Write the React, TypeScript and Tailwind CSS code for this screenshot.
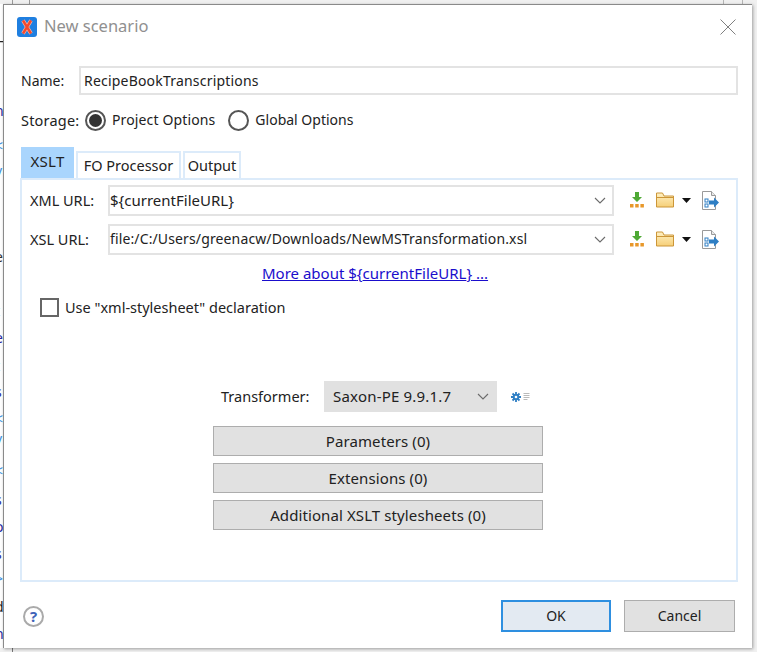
import React from "react";

function Chevron({ c = "#6b6b6b" }: { c?: string }) {
  return (
    <svg width="12" height="7" viewBox="0 0 12 7" fill="none">
      <path d="M1 1l5 5 5-5" stroke={c} strokeWidth="1.1" />
    </svg>
  );
}

function Download() {
  return (
    <svg width="14" height="16" viewBox="0 0 14 16">
      <path d="M5 0h4v5h3l-5 5-5-5h3z" fill="#4fa935" />
      <rect x="0" y="12" width="3.500" height="3.500" fill="#e8982a" />
      <rect x="5.200" y="12" width="3.500" height="3.500" fill="#e8982a" />
      <rect x="10.400" y="12" width="3.500" height="3.500" fill="#e8982a" />
    </svg>
  );
}

function Folder() {
  return (
    <svg width="18" height="16" viewBox="0 0 18 16">
      <defs>
        <linearGradient id="fold" x1="0" y1="0" x2="0" y2="1">
          <stop offset="0" stopColor="#fff1c4" />
          <stop offset="1" stopColor="#f6cf78" />
        </linearGradient>
      </defs>
      <path d="M.5 15V1h6l1.500 3h9.500v11z" fill="url(#fold)" stroke="#cc9638" />
      <path d="M1 5.500h16" stroke="#cc9638" />
    </svg>
  );
}

function Caret() {
  return (
    <svg width="9" height="5" viewBox="0 0 9 5">
      <path d="M0 0h9L4.500 5z" fill="#111" />
    </svg>
  );
}

function DocArrow() {
  return (
    <svg width="17" height="19" viewBox="0 0 17 19">
      <path d="M.5.500h9l4 4v14h-13z" fill="#fff" stroke="#9a9a9a" />
      <path d="M9.500.500v4h4" fill="#e8e8e8" stroke="#9a9a9a" />
      <rect x="3" y="8" width="3" height="3" fill="#fff" stroke="#2f7fc4" />
      <rect x="3" y="13" width="3" height="3" fill="#fff" stroke="#2f7fc4" />
      <path d="M7 9.500h5V6.500l5 5-5 5v-3H7z" fill="#2f7fc4" />
    </svg>
  );
}

function Field({ label, value, valueClass }: { label: string; value: string; valueClass: string }) {
  return (
    <div className="flex items-center h-[32px]">
      <span className="w-[78px] shrink-0 text-[14.500px]">{label}</span>
      <div className="w-[506px] h-[31px] shrink-0 border-2 border-[#e3e3e3] flex items-center justify-between pr-[6px]">
        <span className={valueClass}>{value}</span>
        <Chevron />
      </div>
      <div className="flex items-center ml-[16px]">
        <Download />
        <div className="ml-[12px]"><Folder /></div>
        <div className="ml-[8px]"><Caret /></div>
        <div className="ml-[11px]"><DocArrow /></div>
      </div>
    </div>
  );
}

function GreyButton({ children }: { children: React.ReactNode }) {
  return (
    <button className="w-[330px] h-[30px] bg-[#e1e1e1] border border-[#adadad] flex items-center justify-center text-[15px] tracking-[0.1px]">
      {children}
    </button>
  );
}

const marks: { y: number; c: string; color: string }[] = [
  { y: 30, c: "—", color: "#222" },
  { y: 60, c: "i", color: "#2a2aa0" },
  { y: 100, c: "n", color: "#2a2aa0" },
  { y: 135, c: "<", color: "#3b8fe0" },
  { y: 160, c: "v", color: "#3b8fe0" },
  { y: 246, c: "e", color: "#333" },
  { y: 272, c: "l", color: "#2a2aa0" },
  { y: 300, c: "t", color: "#2a2aa0" },
  { y: 327, c: "e", color: "#2a2aa0" },
  { y: 355, c: "t", color: "#2a2aa0" },
  { y: 381, c: "s", color: "#2a2aa0" },
  { y: 408, c: "<", color: "#3b8fe0" },
  { y: 428, c: "v", color: "#3b8fe0" },
  { y: 460, c: "<", color: "#3b8fe0" },
  { y: 489, c: "s", color: "#2a2aa0" },
  { y: 516, c: "o", color: "#2a2aa0" },
  { y: 543, c: "s", color: "#2a2aa0" },
  { y: 568, c: ">", color: "#3b8fe0" },
  { y: 596, c: "d", color: "#222" },
  { y: 623, c: "n", color: "#2a2aa0" },
];

export default function App() {
  return (
    <div
      className="relative w-[757px] h-[652px] overflow-hidden bg-[#f0f0f0] pl-[3px] pt-[4px] text-[14px] text-[#222] leading-none"
      style={{ fontFamily: '"Noto Sans", sans-serif' }}
    >
      <div className="absolute left-0 top-[4px] w-[3px] h-[644px] bg-white overflow-hidden">
        {marks.map((m) => (
          <span key={m.y} className="absolute left-[-5px] text-[14px]" style={{ top: m.y, color: m.color }}>
            {m.c}
          </span>
        ))}
      </div>
      <div className="absolute left-[12px] top-0 w-px h-[4px] bg-[#9a9a9a]" />
      <div className="absolute left-[29px] top-0 w-px h-[4px] bg-[#9a9a9a]" />
      <div className="absolute left-[723px] top-0 w-px h-[4px] bg-[#b5b5b5]" />
      <div className="absolute left-[742px] top-0 w-px h-[4px] bg-[#b5b5b5]" />
      <div className="absolute left-[12px] top-[648px] w-px h-[4px] bg-[#777]" />

      <div className="relative w-[749px] h-[644px] bg-white border-l border-t border-[#8a8a8a] shadow-[1px_1px_3px_rgba(0,0,0,0.35)] flex flex-col pl-[16px]">
        <div className="flex items-center h-[40px] pt-[3px] ml-[-3px] shrink-0">
          <svg width="20" height="20" viewBox="0 0 20 20">
            <rect width="20" height="20" rx="3" fill="#1f7fe0" />
            <path d="M6 3.500l8 13M14 3.500L6 16.500" stroke="#ffb9a6" strokeWidth="3.800" />
            <path d="M6 3.500l8 13M14 3.500L6 16.500" stroke="#f2492e" strokeWidth="2.400" />
          </svg>
          <span className="ml-[7px] text-[16.500px] text-[#909090]">New scenario</span>
          <svg className="ml-auto mr-[16px]" width="16" height="16" viewBox="0 0 16 16" fill="none">
            <path d="M.5.500l15 15M15.500.500l-15 15" stroke="#808080" />
          </svg>
        </div>

        <div className="flex items-center h-[29px] mt-[21px] shrink-0">
          <span className="w-[59px] shrink-0 pl-[1px]">Name:</span>
          <div className="w-[659px] h-[29px] border-2 border-[#e3e3e3] flex items-center pl-[3px] tracking-[0.2px]">RecipeBookTranscriptions</div>
        </div>

        <div className="flex items-center h-[24px] mt-[13px] shrink-0">
          <span className="w-[65px] shrink-0 pl-[1px] text-[14.500px] tracking-[0.2px]">Storage:</span>
          <div className="w-[21px] h-[21px] rounded-full border-2 border-[#555] flex items-center justify-center shrink-0">
            <div className="w-[13px] h-[13px] rounded-full bg-[#333]" />
          </div>
          <span className="ml-[6px] tracking-[0.13px]">Project Options</span>
          <div className="w-[21px] h-[21px] rounded-full border-2 border-[#555] ml-[13px] shrink-0" />
          <span className="ml-[6px]">Global Options</span>
        </div>

        <div className="flex items-end h-[31px] mt-[15px] ml-[1px] shrink-0">
          <div className="w-[53px] h-[31px] bg-[#a9d5fd] flex items-center justify-center text-[15px] tracking-[0.3px] pb-[2px]">XSLT</div>
          <div className="w-[105px] h-[27px] ml-[2px] border-t-2 border-x-2 border-[#dcebfa] flex items-center justify-center text-[14.500px]">FO Processor</div>
          <div className="w-[58px] h-[27px] ml-[2px] border-t-2 border-x-2 border-[#dcebfa] flex items-center justify-center text-[14.500px]">Output</div>
        </div>

        <div className="w-[718px] h-[404px] border-2 border-[#dcebfa] shrink-0 flex flex-col pl-[8px]">
          <div className="flex flex-col gap-[7px] mt-[4px]">
            <Field label="XML URL:" value="${currentFileURL}" valueClass="text-[15px]" />
            <Field label="XSL URL:" value="file:/C:/Users/greenacw/Downloads/NewMSTransformation.xsl" valueClass="tracking-[0.13px]" />
          </div>
          <div className="mt-[11px] pl-[232px] text-[15px]">
            <a className="underline text-[#1a0dcc]">More about ${"{"}currentFileURL{"}"} ...</a>
          </div>
          <div className="flex items-center mt-[17px] pl-[10px]">
            <div className="w-[19px] h-[19px] border-2 border-[#666] shrink-0" />
            <span className="ml-[6px] text-[14.500px]">Use "xml-stylesheet" declaration</span>
          </div>
          <div className="flex items-center mt-[64px] pl-[191px]">
            <span className="w-[103px] shrink-0 text-[14.500px]">Transformer:</span>
            <div className="w-[173px] h-[31px] bg-[#e1e1e1] flex items-center justify-between pl-[9px] pr-[8px]">
              <span className="text-[15px] tracking-[0.2px]">Saxon-PE 9.9.1.7</span>
              <Chevron />
            </div>
            <svg className="ml-[13px]" width="20" height="12" viewBox="0 0 20 12">
              <path d="M6 1v10M1 6h10M2.500 2.500l7 7M9.500 2.500l-7 7" stroke="#2f7fc4" strokeWidth="1.800" />
              <circle cx="6" cy="6" r="3.200" fill="#2f7fc4" />
              <circle cx="6" cy="6" r="1.300" fill="#fff" />
              <path d="M13.500 2.500h6M13.500 4.500h6M13.500 6.500h6M13.500 8.500h4" stroke="#a8a8a8" strokeWidth="0.800" />
            </svg>
          </div>
          <div className="flex flex-col gap-[7px] mt-[14px] pl-[183px]">
            <GreyButton>Parameters (0)</GreyButton>
            <GreyButton>Extensions (0)</GreyButton>
            <GreyButton>Additional XSLT stylesheets (0)</GreyButton>
          </div>
        </div>

        <div className="flex items-center mt-[18px] shrink-0">
          <div className="relative ml-[3px] w-[21px] h-[21px] rounded-full border-2 border-[#aaa] flex items-center justify-center text-[15px] font-bold text-[#3f63b8]">?</div>
          <div className="ml-auto flex gap-[13px] mr-[17px]">
            <button className="w-[110px] h-[32px] bg-[#e3eaf2] border-2 border-[#2e8fe0]">OK</button>
            <button className="w-[111px] h-[32px] bg-[#e1e1e1] border border-[#adadad]">Cancel</button>
          </div>
        </div>
      </div>
    </div>
  );
}
